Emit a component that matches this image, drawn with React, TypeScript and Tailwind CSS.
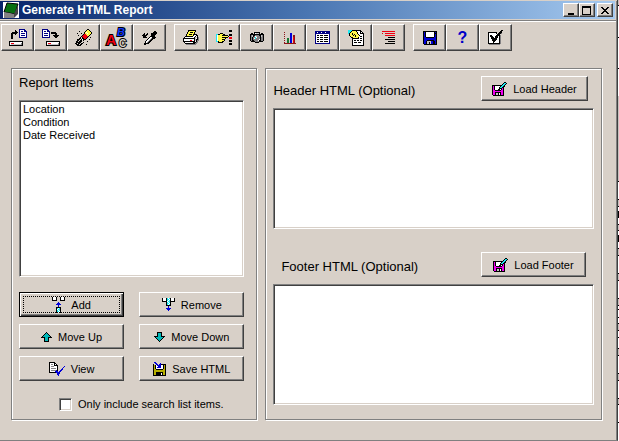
import type { ReactNode } from 'react';
import clsx from 'clsx';

const PALETTE: Record<string, string> = {
  k: '#000000',
  w: '#ffffff',
  n: '#000084',
  b: '#0000d8',
  g: '#848284',
  l: '#c6c3c6',
  r: '#f00010',
  d: '#8c1418',
  y: '#fff84a',
  o: '#b8b000',
  c: '#20e8f0',
  t: '#00b8b8',
  m: '#f000f0',
  e: '#187830',
};

const ICONS: Record<string, string[]> = {
  restore: [
    '..........nnnnnn..',
    '......k...nwwwwnn.',
    '......kk..nwnnwnnn',
    '...kkkkkk.nwwwwwwn',
    '..kkkkkk..nwnnnnwn',
    '..kk..k...nwwwwwwn',
    '..kk......nwnnnnwn',
    '..kk......nwwwwwwn',
    '..kk......nnnnnnnn',
    '..kk..............',
    '..................',
    '..................',
    'kkkkkkkkkkkkkk....',
    'kwwwwwwwwwwwwk....',
    'kwrrrwwwwwwwgk....',
    'kwllllllllllgk....',
    'kkkkkkkkkkkkkk....',
  ],
  backup: [
    'nnnnnn............',
    'nwwwwnn...........',
    'nwnnwnnn..........',
    'nwwwwwwn.kkkkk....',
    'nwnnnnwn.kkkkkk...',
    'nwwwwwwn.....kk...',
    'nwnnnnwn...kkkkkk.',
    'nwwwwwwn....kkkk..',
    'nnnnnnnn.....kk...',
    '..................',
    '..................',
    '..................',
    '....kkkkkkkkkkkkkk',
    '....kwwwwwwwwwwwwk',
    '....kwrrrwwwwwwwgk',
    '....kwllllllllllgk',
    '....kkkkkkkkkkkkkk',
  ],
  eraser: [
    '............kk...',
    '...........kyyk..',
    '....k.....kyyyyk.',
    '.........kywyyyyk',
    '..k...k..kyywyyyk',
    '........krryyyyk.',
    '...k...krrrryyk..',
    '......krrrrrrk...',
    '.....k.krrrrk..k.',
    '....kk.kkrrk.....',
    '..kkk.kwkkk...k..',
    '..kk.kk.k........',
    '.kk.kkk.....k....',
    '.kkkkk..k........',
    'kk.kk.kk.........',
    '.kkk.kk....k.....',
    '..kkkk...........',
  ],
  dropper: [
    '............kk.',
    '...........kkkk',
    '..k..k...kkkkkk',
    '.kk.kk...kkkkk.',
    'kkkkk....kkkk..',
    '.kkk....kkkkk..',
    '.kkkk..kwwkkkk.',
    '......kwwgkkk..',
    '.....kwwgkk....',
    '....kwwgkk.....',
    '...kwwgkk......',
    '...kwgkk.......',
    '..kkkkk........',
    '..kk...........',
  ],
  print: [
    '.....kkkkkkkk...',
    '.....kyyyyyyk...',
    '....kyykkkyk....',
    '....kyyyyyyk....',
    '...kyykkkykkkk..',
    '...kyyyyyykwwkk.',
    '..kkkkkkkkwwkwk.',
    '.kwwwwwwwwwkllkg',
    'kkkkkkkkkkkklwkg',
    'kwwwwwwwwwwklkkg',
    'kwwwwwwrrwwklkgg',
    'kkkkkkkkkkkkwkg.',
    '.kwwwwwwwwkkkgg.',
    '..kkkkkkkkkkgg..',
    '...gggggggggg...',
  ],
  hand: [
    '.............kkk',
    '.............kkk',
    '................',
    '....kkk.........',
    'cckkyyykk....kkk',
    'cwyyyykkkkkk.kkk',
    'cwyyyyyyyyyyk...',
    'cwyyyykkkkkk.rrr',
    'cwyyyyyyyk...rrr',
    'cwyyyykkk.......',
    'cwyyyyyyk....kkk',
    'cckyyykk.....kkk',
    '..kkkkk.........',
    '.............kkk',
    '.............kkk',
  ],
  camera: [
    '....kkkkkk....',
    '.kk.kwlllk.kk.',
    'kkkkkkkkkkkkkk',
    'kglkkggggkklgk',
    'kglkgwlgggklgk',
    'kgkggcwgggkggk',
    'kgkgwcggggkggk',
    'kgkggggggwkggk',
    'kgkkggggwkkggk',
    '.kkkkggggkkkk.',
    '.....kkkk.....',
  ],
  chart: [
    'd...........',
    '......bb....',
    'd.....bb....',
    '......bb.dd.',
    'd.....bb.dd.',
    '......bb.rd.',
    'd..ee.bb.rd.',
    '...ee.bb.rd.',
    'd..ee.bb.rd.',
    '...ee.bb.rd.',
    'd..ee.bb.rd.',
    'dddddddddddd',
  ],
  grid: [
    'nnnnnnnnnnnnnnn',
    'nnwnnnwnnnwnnnn',
    'nnnnnnnnnnnnnnn',
    'nwwwwwwwwwwwwwn',
    'nwkkwkkkwkkkkwn',
    'nwwwwwwwwwwwwwn',
    'nwkkwkkkwkkkkwn',
    'nwwwwwwwwwwwwwn',
    'nwkkwkkkwkkkkwn',
    'nwwwwwwwwwwwwwn',
    'nwkkwkkkwkkkkwn',
    'nwwwwwwwwwwwwwn',
    'nnnnnnnnnnnnnnn',
  ],
  report: [
    'cccckkkkkkkkk...',
    'ccckyyyykwwwkk..',
    'cckyyyyyykwwkwk.',
    'ckyykyyyykwwkkkk',
    '.kyykykyyykwwwwk',
    '.kyyykykyyykwwwk',
    '..kyyyykyyywkkwk',
    '...kkyyyyykwwwwk',
    '....kkkkkkkwkkwk',
    '....kwwwwwwwwwwk',
    '....kwkkwkkwkkwk',
    '....kwwwwwwwwwwk',
    '....kwkkkwkkkwwk',
    '....kwwwwwwwwwwk',
    '....kwwwwwwwwwwk',
    '....kkkkkkkkkkkk',
  ],
  outline: [
    'rrrrrrrrrrrrr',
    '.............',
    'r..rrrrrrrrrr',
    '.............',
    '...rrrrrrrrrr',
    '.............',
    '......kkkkkkk',
    '.............',
    '...kkkkkkkkkk',
    '.............',
    '......kkkkkkk',
    '.............',
    '...kkkkkkkkkk',
  ],
  save: [
    'kkkkkkkkkkkkkk',
    'kbkwwwwwwwwkbk',
    'kbkwwwwwwwwkkk',
    'kbkwwwwwwwwkbk',
    'kbkwwwwwwwwkbk',
    'kbkwwwwwwwwkbk',
    'kbbkkkkkkkkbbk',
    'kbbbbbbbbbbbbk',
    'kbbbbbbbbbbbbk',
    'kbbbkkkkkkkbbk',
    'kbbkllllbbkkbk',
    'kbbkllklbbkkbk',
    'kbbkllklbbkkbk',
    '.kkkkkkkkkkkkk',
  ],
  check: [
    '.............kk',
    '............kk.',
    'kkkkkkkkk..kkk.',
    'kwwwwwwwk.kkkg.',
    'kwwwwwwwwkkk...',
    'kwkkwwwwkkkkg..',
    'kwkkkwwkkkwkg..',
    'kwwkkkwkkkwkg..',
    'kwwkkkkkkwwkg..',
    'kwwwkkkkkwwkg..',
    'kwwwkkkkwwwkg..',
    'kwwwwkkwwwwkg..',
    'kwwwwkwwwwwkg..',
    'kkkkkkkkkkkkg..',
    '.ggggggggggg...',
  ],
  add: [
    'kwwwk...kwwwk',
    'kwwwk...kwwwk',
    'kwwwk...kwwwk',
    'kkkkk...kkkkk',
    '.............',
    '......b......',
    '.....bbb.....',
    '....bbbbb....',
    '......b......',
    '......b......',
    '....kkkkk....',
    '....kcwck....',
    '....kwcck....',
    '....kcwck....',
    '....kccwk....',
    '....kcwck....',
  ],
  remove: [
    'kwwwkcwckwwwk',
    'kwwwkccwkwwwk',
    'kwwwkcwckwwwk',
    'kkkkkwcckkkkk',
    '....kcwck....',
    '....kccwk....',
    '....kcwck....',
    '....kkkkk....',
    '......b......',
    '......b......',
    '....bbbbb....',
    '.....bbb.....',
    '......b......',
  ],
  up: [
    '.....k.....',
    '....ktk....',
    '...ktttk...',
    '..ktttttk..',
    '.ktttttttk.',
    'kkkktttkkkk',
    '...ktttk...',
    '...ktttk...',
    '...ktttk...',
    '...kkkkk...',
  ],
  down: [
    '...kkkkk...',
    '...ktttk...',
    '...ktttk...',
    '...ktttk...',
    'kkkktttkkkk',
    '.ktttttttk.',
    '..ktttttk..',
    '...ktttk...',
    '....ktk....',
    '.....k.....',
  ],
  view: [
    'kkkkkk..........',
    'kwwwwkk.........',
    'kwggwkwk........',
    'kwwwwkkkk.......',
    'kwgggwwwk......b',
    'kwwwwwwwk.....b.',
    'kwgggggwk....b..',
    'kwwwwwwwk...bb..',
    'kwgggggbk..bb...',
    'kwwwwwbbb.bb....',
    'kkkkkkkbbbb.....',
    '........bbb.....',
    '........bb......',
    '.........b......',
  ],
  export: [
    '.bb..........',
    '..bb...b.....',
    'k..bb.bbkkkkk',
    'kokwbbbbwwkok',
    'kokwwbbbwwkok',
    'kokwbbbbwwkok',
    'kokwwwwwwwkok',
    'kookkkkkkkook',
    'koooooooooook',
    'koooooooooook',
    'kookkkkkkkook',
    'kookkkkkwkook',
    'kookkkkkwkook',
    'kkkkkkkkkkkkk',
  ],
  load: [
    '............kk.',
    '...........kcck',
    '..........kcck.',
    'kkkkkkkkkkcck..',
    'kmkwwwwwkcckk..',
    'kmkwwwwkcckk...',
    'kmkwwwwkkkmk...',
    'kmkwwwkkwkmk...',
    'kmmkkkkkkmmk...',
    'kmmmmmmmmmmk...',
    'kmmkkkkkkmmk...',
    'kmmkllkwkmmk...',
    'kmmkllkwkmmk...',
    '.kkkkkkkkkkk...',
  ],
};

function PixelIcon({ name }: { name: string }) {
  const rows = ICONS[name];
  const width = rows[0].length;

  return (
    <svg width={width} height={rows.length} viewBox={`0 0 ${width} ${rows.length}`} shapeRendering="crispEdges" className="shrink-0" aria-hidden="true">
      {rows.flatMap((row, y) =>
        row.split('').map((ch, x) =>
          ch === '.' ? null : <rect key={`${x}-${y}`} x={x} y={y} width="1" height="1" fill={PALETTE[ch]} />
        )
      )}
    </svg>
  );
}

function LettersIcon() {
  return (
    <svg width="25" height="25" viewBox="0 0 25 25" className="shrink-0" aria-hidden="true" fontWeight="bold" fontFamily="Liberation Sans, sans-serif" paintOrder="stroke" strokeWidth="2" stroke="#000">
      <text x="13" y="11" fontSize="11" fontStyle="italic" fill="#1038ff">B</text>
      <text x="2" y="20" fontSize="14" fill="#f00010">A</text>
      <text x="15" y="22" fontSize="10" fill="#d8d0c8">C</text>
    </svg>
  );
}

const raised =
  'border border-t-white border-l-white border-r-[#404040] border-b-[#404040] bg-[#d8d0c8] shadow-[inset_-1px_-1px_0_#808080]';
const sunken =
  'border border-t-[#808080] border-l-[#808080] border-r-white border-b-white bg-white shadow-[inset_1px_1px_0_#404040,inset_-1px_-1px_0_#d8d0c8]';
const groove = 'border border-[#808080] shadow-[1px_1px_0_#fff,inset_1px_1px_0_#fff]';

function ToolButton({ label, children }: { label: string; children: ReactNode }) {
  return (
    <button type="button" aria-label={label} className={clsx('flex h-[27px] w-[33px] items-center justify-center', raised)}>
      {children}
    </button>
  );
}

interface PushButtonProps {
  icon: string;
  children: ReactNode;
  focused?: boolean;
  className?: string;
}

function PushButton({ icon, children, focused, className }: PushButtonProps) {
  return (
    <button
      type="button"
      className={clsx(
        'relative flex h-[25px] items-center justify-center gap-1.5',
        focused
          ? 'border border-black bg-[#d8d0c8] shadow-[inset_1px_1px_0_#fff,inset_-1px_-1px_0_#404040,inset_-2px_-2px_0_#808080]'
          : raised,
        className
      )}
    >
      {focused && <span className="absolute inset-[3px] border border-dotted border-black" />}
      <PixelIcon name={icon} />
      <span className="pt-px">{children}</span>
    </button>
  );
}

function TitleBar() {
  const button = clsx('flex h-[14px] w-4 items-center justify-center', raised);

  return (
    <header className="mt-px mr-px flex h-[18px] items-center bg-linear-to-r from-[#0a246a] via-[#4a76b2] to-[#a6caf0] pr-0.5 pl-[3px]">
      <svg width="16" height="16" viewBox="0 0 16 16" aria-hidden="true">
        <path d="M0 0h16v16H0z" fill="#fff" />
        <path d="M4 1l11 1-3 10-11-2z" fill="#087010" stroke="#000" />
        <path d="M1 10l10 2v4H1z" fill="#848284" />
        <path d="M11 12l4-9v9l-4 4z" fill="#444" />
      </svg>
      <h1 className="ml-[3px] flex-1 text-xs font-bold text-white">Generate HTML Report</h1>
      <button type="button" aria-label="Minimize" className={button}>
        <svg width="10" height="9" shapeRendering="crispEdges"><path d="M2 7h6v2H2z" /></svg>
      </button>
      <button type="button" aria-label="Maximize" className={button}>
        <svg width="10" height="9" shapeRendering="crispEdges"><path d="M0 0h9v9H0zM1 2v6h7V2z" fillRule="evenodd" /></svg>
      </button>
      <button type="button" aria-label="Close" className={clsx('ml-0.5', button)}>
        <svg width="8" height="7" shapeRendering="crispEdges">
          <path d="M0 0h2v1h1v1h2v-1h1v-1h2v1h-1v1h-1v1h-1v1h1v1h1v1h1v1h-2v-1h-1v-1h-2v1h-1v1h-2v-1h1v-1h1v-1h1v-1h-1v-1h-1v-1h-1z" />
        </svg>
      </button>
    </header>
  );
}

function Toolbar() {
  return (
    <div className="mt-px border-t border-[#808080]">
      <div className="flex gap-2 border-t border-white pt-0.5 pl-px">
        <div className="flex">
          <ToolButton label="Restore"><PixelIcon name="restore" /></ToolButton>
          <ToolButton label="Backup"><PixelIcon name="backup" /></ToolButton>
          <ToolButton label="Erase"><PixelIcon name="eraser" /></ToolButton>
          <ToolButton label="Spelling"><LettersIcon /></ToolButton>
          <ToolButton label="Pick"><PixelIcon name="dropper" /></ToolButton>
        </div>
        <div className="flex">
          <ToolButton label="Print"><PixelIcon name="print" /></ToolButton>
          <ToolButton label="Select"><PixelIcon name="hand" /></ToolButton>
          <ToolButton label="Pictures"><PixelIcon name="camera" /></ToolButton>
          <ToolButton label="Chart"><PixelIcon name="chart" /></ToolButton>
          <ToolButton label="Table"><PixelIcon name="grid" /></ToolButton>
          <ToolButton label="Report"><PixelIcon name="report" /></ToolButton>
          <ToolButton label="Outline"><PixelIcon name="outline" /></ToolButton>
        </div>
        <div className="flex">
          <ToolButton label="Save"><PixelIcon name="save" /></ToolButton>
          <ToolButton label="Help">
            <span className="text-base font-bold text-[#0000c8]">?</span>
          </ToolButton>
          <ToolButton label="Options"><PixelIcon name="check" /></ToolButton>
        </div>
      </div>
    </div>
  );
}

function ReportItems() {
  return (
    <section className={clsx('pt-1 pr-3 pl-[7px]', groove)}>
      <label htmlFor="report-items" className="block h-[27px] text-[13px] leading-5">Report Items</label>
      <select id="report-items" multiple className={clsx('block h-[177px] w-full appearance-none overflow-hidden p-0 pt-0.5 pl-[3px] text-[11px] outline-none', sunken)}>
        <option className="h-[13px] min-h-0 p-0 leading-[13px]">Location</option>
        <option className="h-[13px] min-h-0 p-0 leading-[13px]">Condition</option>
        <option className="h-[13px] min-h-0 p-0 leading-[13px]">Date Received</option>
      </select>
      <div className="mt-[15px] grid grid-cols-2 gap-x-[15px] gap-y-[7px]">
        <PushButton icon="add" focused>Add</PushButton>
        <PushButton icon="remove">Remove</PushButton>
        <PushButton icon="up">Move Up</PushButton>
        <PushButton icon="down">Move Down</PushButton>
        <PushButton icon="view">View</PushButton>
        <PushButton icon="export">Save HTML</PushButton>
      </div>
      <label className="mt-[17px] mb-2 flex items-center gap-1.5 pl-10 whitespace-nowrap">
        <input type="checkbox" className={clsx('h-[13px] w-[13px] appearance-none', sunken)} />
        Only include search list items.
      </label>
    </section>
  );
}

function HtmlFields() {
  return (
    <section className={clsx('px-[7px] pt-[7px]', groove)}>
      <div className="flex items-center justify-between pr-1.5">
        <label htmlFor="header-html" className="pt-1 text-[13px]">Header HTML (Optional)</label>
        <PushButton icon="load" className="w-[107px]">Load Header</PushButton>
      </div>
      <textarea id="header-html" className={clsx('mt-[7px] block h-[121px] w-full resize-none p-1 outline-none', sunken)} />
      <div className="mt-[23px] flex items-center justify-between pr-2 pl-2">
        <label htmlFor="footer-html" className="pt-1 text-[13px]">Footer HTML (Optional)</label>
        <PushButton icon="load" className="w-[105px]">Load Footer</PushButton>
      </div>
      <textarea id="footer-html" className={clsx('mt-[7px] mb-[14px] block h-[121px] w-full resize-none p-1 outline-none', sunken)} />
    </section>
  );
}

// Sliver of the desktop behind the window
const MARKS = [5, 37, 68, 181, 199, 206, 224, 230, 248, 255, 273, 280, 298, 305, 309, 317, 323, 330, 337, 348, 355, 373, 380, 398, 404, 422];

function DesktopEdge() {
  return (
    <svg width="1" height="441" className="shrink-0" shapeRendering="crispEdges" aria-hidden="true">
      <path d="M0 0h1v5H0zM0 96h1v85H0zM0 199h1v7H0zM0 224h1v6H0zM0 248h1v7H0zM0 273h1v7H0zM0 298h1v7H0zM0 323h1v7H0zM0 348h1v7H0zM0 373h1v7H0zM0 398h1v6H0z" fill="#c8c4c0" />
      <path d="M0 211h1v7H0zM0 235h1v7H0z" />
      {MARKS.map((y) => (
        <rect key={y} y={y} width="1" height="1" />
      ))}
    </svg>
  );
}

export default function App() {
  return (
    <div className="flex min-h-screen bg-white font-['Liberation_Sans',Arial,sans-serif] text-[11px] leading-[13px] text-black">
      <div className="flex-1 border-r border-b border-r-[#404040] border-b-[#808080] bg-[#d8d0c8]">
        <div className="h-full border-r border-[#808080]">
          <TitleBar />
          <Toolbar />
          <main className="mt-[17px] mr-[14px] mb-[18px] ml-[11px] grid grid-cols-[246fr_336fr] gap-2">
            <ReportItems />
            <HtmlFields />
          </main>
        </div>
      </div>
      <DesktopEdge />
    </div>
  );
}
